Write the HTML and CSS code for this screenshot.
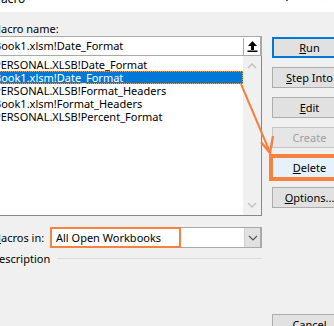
FILE: index.html
```html
<!DOCTYPE html>
<html>
<head>
<meta charset="utf-8">
<link rel="stylesheet" href="styles.css">
</head>
<body>
<div class="titlebar">
  <span class="title">Macro</span>
  <span class="tb-icons"><span class="help">?</span><span class="close">✕</span></span>
</div>
<div class="main">
  <div class="left">
    <div class="label-name">Macro name:</div>
    <div class="namebox">
      <span class="name-text">Book1.xlsm!Date_Format</span>
      <span class="upbtn">
        <svg width="11" height="12" viewBox="0 0 11 12"><path d="M5.5 1 L1 6 H4 V10 H7 V6 H10 Z" fill="#000"/><rect x="0.5" y="10.5" width="10" height="1.5" fill="#000"/></svg>
      </span>
    </div>
    <div class="list">
      <div class="items">
        <div class="item">PERSONAL.XLSB!Date_Format</div>
        <div class="item sel">Book1.xlsm!Date_Format</div>
        <div class="item">PERSONAL.XLSB!Format_Headers</div>
        <div class="item">Book1.xlsm!Format_Headers</div>
        <div class="item">PERSONAL.XLSB!Percent_Format</div>
      </div>
      <div class="scroll">
        <svg width="10" height="6" viewBox="0 0 10 6"><path d="M1 5 L5 1 L9 5" stroke="#c2c2c2" stroke-width="1.5" fill="none"/></svg>
        <svg width="10" height="6" viewBox="0 0 10 6"><path d="M1 1 L5 5 L9 1" stroke="#c2c2c2" stroke-width="1.5" fill="none"/></svg>
      </div>
    </div>
    <div class="combo-row">
      <span class="combo-label"><u>M</u>acros in:</span>
      <div class="combo">
        <span class="combo-text">All Open Workbooks</span>
        <span class="dropbtn">
          <svg width="10" height="6" viewBox="0 0 10 6"><path d="M1 1 L5 5 L9 1" stroke="#555" stroke-width="1.2" fill="none"/></svg>
        </span>
      </div>
    </div>
    <div class="desc-row">
      <span class="desc-label">Description</span>
      <span class="desc-line"></span>
    </div>
  </div>
  <div class="right">
    <div class="btn default"><u>R</u>un</div>
    <div class="btn"><u>S</u>tep Into</div>
    <div class="btn"><u>E</u>dit</div>
    <div class="btn disabled">Create</div>
    <div class="btn focus"><u>D</u>elete</div>
    <div class="btn"><u>O</u>ptions...</div>
    <div class="btn cancel">Cancel</div>
  </div>
</div>
<svg class="arrow" width="334" height="326" viewBox="0 0 334 326">
  <path d="M241 84 L269 150" stroke="#f7813e" stroke-width="2" fill="none"/>
  <path d="M261 142 L270 153 L273 136" stroke="#f7813e" stroke-width="2.4" fill="none" stroke-linejoin="miter"/>
</svg>
</body>
</html>
```
FILE: styles.css
```css
html, body {
  margin: 0;
  padding: 0;
}
body {
  width: 334px;
  height: 326px;
  overflow: hidden;
  background: #f0f0f0;
  font-family: "Noto Sans", "Liberation Sans", sans-serif;
  font-size: 11px;
  color: #000;
  position: relative;
}
.titlebar {
  height: 12px;
  background: #fff;
  position: relative;
  overflow: hidden;
}
.title {
  position: absolute;
  left: -10px;
  top: -9px;
  font-size: 12px;
  line-height: 16px;
}
.tb-icons {
  position: absolute;
  right: 4px;
  top: -11px;
  font-size: 12px;
  line-height: 16px;
  display: flex;
  gap: 30px;
}
.main {
  display: flex;
  gap: 10px;
  margin-left: -9px;
}
.left {
  width: 271px;
  display: flex;
  flex-direction: column;
}
.label-name {
  margin-top: 10px;
  height: 14px;
  line-height: 14px;
}
.namebox {
  height: 20px;
  box-sizing: border-box;
  background: #fff;
  border: 1px solid #a9a9a9;
  border-right-width: 2px;
  display: flex;
  align-items: center;
}
.name-text {
  flex: 1;
  padding-left: 2px;
  line-height: 16px;
}
.upbtn {
  width: 17px;
  height: 17px;
  box-sizing: border-box;
  border-left: 1px solid #a9a9a9;
  background: #fff;
  display: flex;
  align-items: center;
  justify-content: center;
}
.list {
  height: 160px;
  box-sizing: border-box;
  border: 1px solid #828790;
  border-top: 0;
  background: #fff;
  display: flex;
}
.items {
  flex: 1;
  padding-top: 2px;
}
.item {
  height: 13px;
  line-height: 13px;
  padding-left: 2px;
  white-space: nowrap;
  box-sizing: border-box;
}
.item.sel {
  background: #0078d7;
  color: #fff;
  border: 1px dotted #f5a040;
  border-left: 0;
  line-height: 11px;
}
.scroll {
  width: 18px;
  background: #f0f0f0;
  display: flex;
  flex-direction: column;
  align-items: center;
  justify-content: space-between;
  padding: 7px 0 7px;
  box-sizing: border-box;
}
.combo-row {
  margin-top: 11px;
  height: 21px;
  display: flex;
  align-items: center;
}
.combo-label {
  width: 59px;
  line-height: 14px;
}
.combo {
  width: 212px;
  height: 21px;
  box-sizing: border-box;
  background: #fff;
  border: 1px solid #a9a9a9;
  border-right-width: 2px;
  display: flex;
  position: relative;
}
.combo-text {
  width: 131px;
  box-sizing: border-box;
  border: 2px solid #f7813e;
  margin: -1px 0 -1px -1px;
  padding-left: 4px;
  line-height: 17px;
}
.dropbtn {
  margin-left: auto;
  width: 15px;
  background: #e1e1e1;
  border-left: 1px solid #cfcfcf;
  display: flex;
  align-items: center;
  justify-content: center;
}
.desc-row {
  margin-top: 3px;
  display: flex;
  align-items: center;
  height: 16px;
}
.desc-label {
  line-height: 16px;
  padding-right: 7px;
}
.desc-line {
  flex: 1;
  height: 1px;
  background: #dcdcdc;
  margin-top: -1px;
}
.right {
  width: 75px;
  flex: none;
  padding-top: 25px;
  display: flex;
  flex-direction: column;
  gap: 9px;
}
.btn {
  height: 21px;
  box-sizing: border-box;
  background: #e1e1e1;
  border: 1px solid #adadad;
  text-align: center;
  line-height: 19px;
}
.btn.default {
  border: 2px solid #0078d7;
  line-height: 17px;
}
.btn.disabled {
  color: #a0a0a0;
  background: #e6e6e6;
  border-color: #c6c6c6;
}
.btn.focus {
  background: #e5f1fb;
  outline: 3px solid #f7813e;
  outline-offset: 0;
  border-color: #f7813e;
}
.btn.cancel {
  margin-top: 97px;
}
.arrow {
  position: absolute;
  left: 0;
  top: 0;
  pointer-events: none;
}
```
